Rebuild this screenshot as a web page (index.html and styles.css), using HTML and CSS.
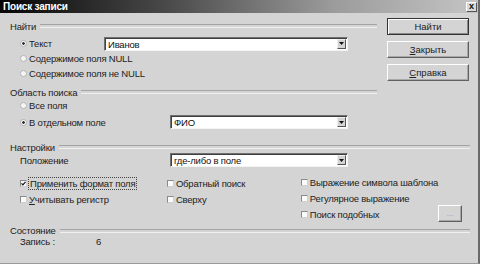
FILE: index.html
```html
<!DOCTYPE html>
<html lang="ru">
<head>
    <meta charset="UTF-8">
    <title>Поиск записи</title>
    <link rel="stylesheet" href="styles.css">
</head>
<body>
    <div class="window">
        <div class="titlebar">
            <span class="title">Поиск записи</span>
            <span class="close">x</span>
        </div>

        <div class="content">
            <div class="top">
                <div class="main">
                    <div class="legend"><span>Найти</span></div>
                    <div class="options">
                        <div class="row">
                            <span class="radio checked"></span>
                            <span>Текст</span>
                            <div class="combo wide">
                                <span class="value">Иванов</span>
                                <span class="arrow"><svg width="5" height="3" viewBox="0 0 5 3"><path d="M0 0h5L2.5 3z" fill="#111"/></svg></span>
                            </div>
                        </div>
                        <div class="row">
                            <span class="radio"></span>
                            <span>Содержимое поля NULL</span>
                        </div>
                        <div class="row">
                            <span class="radio"></span>
                            <span>Содержимое поля не NULL</span>
                        </div>
                    </div>

                    <div class="legend area"><span>Область поиска</span></div>
                    <div class="options">
                        <div class="row short">
                            <span class="radio"></span>
                            <span>Все поля</span>
                        </div>
                        <div class="row tall">
                            <span class="radio checked"></span>
                            <span>В отдельном поле</span>
                            <div class="combo narrow">
                                <span class="value">ФИО</span>
                                <span class="arrow"><svg width="5" height="3" viewBox="0 0 5 3"><path d="M0 0h5L2.5 3z" fill="#111"/></svg></span>
                            </div>
                        </div>
                    </div>
                </div>

                <div class="actions">
                    <button class="btn default">Найти</button>
                    <button class="btn"><u>З</u>акрыть</button>
                    <button class="btn"><u>С</u>правка</button>
                </div>
            </div>

            <div class="legend settings"><span>Настройки</span></div>
            <div class="position">
                <span class="pos-label">Положение</span>
                <div class="combo narrow">
                    <span class="value">где-либо в поле</span>
                    <span class="arrow"><svg width="5" height="3" viewBox="0 0 5 3"><path d="M0 0h5L2.5 3z" fill="#111"/></svg></span>
                </div>
            </div>

            <div class="checks">
                <div class="col col1">
                    <div class="check-row">
                        <span class="box checked"><svg width="5" height="5" viewBox="0 0 5 5"><path d="M0.5 2.3l1.4 1.5L4.5 0.8" stroke="#111" stroke-width="1.2" fill="none"/></svg></span>
                        <span class="focus">Применить формат поля</span>
                    </div>
                    <div class="check-row">
                        <span class="box"></span>
                        <span><u>У</u>читывать регистр</span>
                    </div>
                </div>
                <div class="col col2">
                    <div class="check-row">
                        <span class="box"></span>
                        <span>Обратный поиск</span>
                    </div>
                    <div class="check-row">
                        <span class="box"></span>
                        <span>Сверху</span>
                    </div>
                </div>
                <div class="col col3">
                    <div class="check-row">
                        <span class="box"></span>
                        <span>Выражение символа шаблона</span>
                    </div>
                    <div class="check-row">
                        <span class="box"></span>
                        <span>Регулярное выражение</span>
                    </div>
                    <div class="check-row">
                        <span class="box"></span>
                        <span>Поиск подобных</span>
                    </div>
                </div>
                <button class="btn dots">...</button>
            </div>

            <div class="legend state"><span>Состояние</span></div>
            <div class="record">
                <span class="rec-label">Запись :</span>
                <span>6</span>
            </div>
        </div>
    </div>
</body>
</html>
```

FILE: styles.css
```css
* {
    box-sizing: border-box;
}

body {
    margin: 0;
    font-family: "Liberation Sans", Arial, sans-serif;
    font-size: 9.5px;
    letter-spacing: -0.2px;
    color: #222;
    background: #d4d4d4;
}

.window {
    width: 480px;
    height: 264px;
    background: #d4d4d4;
    border-right: 2px solid #6a6a6a;
    border-bottom: 1px solid #9a9a9a;
    overflow: hidden;
    white-space: nowrap;
}

.titlebar {
    height: 13px;
    display: flex;
    align-items: center;
    justify-content: space-between;
    padding: 0 1px 0 3px;
    background: linear-gradient(to right, #050505, #4a4a4a 35%, #9c9c9c 70%, #c4c4c4);
    color: #fff;
    font-size: 10px;
    font-weight: bold;
}

.close {
    width: 11px;
    height: 10px;
    background: #d8d8d8;
    border: 1px solid;
    border-color: #fff #555 #555 #fff;
    color: #111;
    font-size: 9px;
    line-height: 7px;
    text-align: center;
}

.content {
    padding: 5px 8px 0 10px;
}

.top {
    display: flex;
}

.main {
    width: 367px;
    padding-top: 2px;
}

.actions {
    width: 82px;
    margin-left: 10px;
    display: flex;
    flex-direction: column;
    gap: 6px;
}

.btn {
    height: 17px;
    padding: 0;
    font: inherit;
    color: #222;
    background: #d4d4d4;
    border: 1px solid;
    border-color: #fff #606060 #606060 #fff;
    box-shadow: inset -1px -1px 0 #a8a8a8;
}

.btn.default {
    border-color: #333;
    box-shadow: inset 1px 1px 0 #fff, inset -1px -1px 0 #888;
}

.legend {
    display: flex;
    align-items: center;
    gap: 4px;
    height: 12px;
}

.legend::after {
    content: "";
    flex: 1;
    height: 2px;
    border-top: 1px solid #a4a4a4;
    border-bottom: 1px solid #f0f0f0;
}

.legend.area {
    margin-top: 5px;
}

.legend.settings {
    margin-top: 11px;
}

.legend.state {
    margin-top: 3px;
    height: 11px;
}

.options {
    margin-top: 4px;
    padding: 0 29px 0 10px;
}

.legend.area + .options {
    margin-top: 0;
}

.row {
    display: flex;
    align-items: center;
    height: 15px;
}

.row.short {
    height: 14px;
}

.row.tall {
    height: 16px;
    margin-top: 2px;
}

.radio {
    width: 7px;
    height: 7px;
    margin-right: 2px;
    border-radius: 50%;
    background: #f6f6f6;
    border: 1px solid #b4b4b4;
}

.radio.checked {
    background: radial-gradient(circle, #333 0 1px, #f6f6f6 1.6px);
}

.combo {
    display: flex;
    height: 14px;
    margin-left: auto;
    padding: 1px;
    background: #fff;
    border: 1px solid;
    border-color: #707070 #f4f4f4 #f4f4f4 #707070;
    box-shadow: inset 1px 1px 0 #404040;
}

.combo.wide {
    width: 244px;
}

.combo.narrow {
    width: 178px;
}

.combo .value {
    flex: 1;
    padding-left: 2px;
    line-height: 11px;
    color: #111;
}

.combo .arrow {
    width: 9px;
    display: flex;
    align-items: center;
    justify-content: center;
    background: #d4d4d4;
    border: 1px solid;
    border-color: #eee #555 #555 #eee;
}

.position {
    display: flex;
    align-items: center;
    height: 14px;
    padding-left: 10px;
}

.pos-label {
    width: 150px;
}

.position .combo {
    margin-left: 0;
}

.checks {
    display: flex;
    margin-top: 8px;
    padding: 0 8px 0 10px;
}

.col {
    display: flex;
    flex-direction: column;
}

.col1 {
    width: 148px;
}

.col2 {
    width: 135px;
}

.col3 {
    flex: 1;
    margin-top: -1px;
}

.check-row {
    display: flex;
    align-items: center;
    height: 16px;
}

.box {
    width: 7px;
    height: 7px;
    margin-right: 2px;
    display: flex;
    align-items: center;
    justify-content: center;
    background: #fafafa;
    border: 1px solid;
    border-color: #8a8a8a #d0d0d0 #d0d0d0 #8a8a8a;
}

.focus {
    outline: 1px dotted #444;
    padding: 0 1px;
}

.btn.dots {
    width: 24px;
    align-self: flex-end;
    font-size: 8px;
    color: #999;
}

.record {
    display: flex;
    align-items: center;
    height: 11px;
    padding-left: 10px;
}

.rec-label {
    width: 76px;
}
```
